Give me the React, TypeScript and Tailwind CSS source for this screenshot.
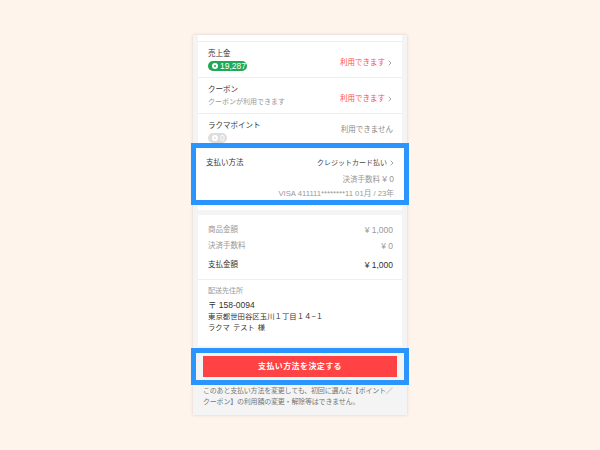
import { ChevronRight } from "lucide-react";

function Chevron() {
  return <ChevronRight className="w-[8px] h-[8px] ml-[1px] -mr-[1px] text-[#777]" strokeWidth={2} />;
}

function CoinBadge({ value, off }: { value: string; off?: boolean }) {
  return (
    <div
      className={`h-[10px] mt-[1px] inline-flex items-center self-start rounded-full gap-[2px] text-[8.5px] leading-none text-white ${
        off ? "bg-[#dddddd] w-[19px] pl-[4px]" : "bg-[#1fa855] w-[39px] pl-[4px]"
      }`}
    >
      <span className="w-[6px] h-[6px] shrink-0 rounded-full border-[2px] border-white" />
      {value}
    </div>
  );
}

function UseRow({
  title,
  sub,
  status,
  active,
}: {
  title: string;
  sub: React.ReactNode;
  status: string;
  active?: boolean;
}) {
  return (
    <div className="h-[36px] flex justify-between items-center pl-[10px] pr-[9px] border-t border-[#eeeeee]">
      <div className="flex flex-col">
        <span className="text-[7.5px] leading-[12px] text-[#333]">{title}</span>
        {sub}
      </div>
      <div className={`flex items-center ${active ? "mt-[6px]" : "-mt-[3px]"}`}>
        <span className={`text-[7.5px] ${active ? "text-[#ff4b4f]" : "text-[#888]"}`}>{status}</span>
        {active && <Chevron />}
      </div>
    </div>
  );
}

export default function App() {
  return (
    <div
      className="w-[600px] h-[450px] bg-[#fff4ec] overflow-hidden pt-[35px]"
      style={{ fontFamily: '"Liberation Sans", "Noto Sans CJK JP", sans-serif' }}
    >
      <div className="w-[214px] h-[380px] ml-[193px] bg-[#f4f4f4] shadow-[0_0_3px_rgba(0,0,0,0.15)] px-[5px] flex flex-col">
        {/* ---------- points + payment method ---------- */}
        <div className="bg-white pt-[6px] pb-[5px] shrink-0">
          <div className="h-[102px] overflow-hidden">
            <UseRow title="売上金" sub={<CoinBadge value="19,287" />} status="利用できます" active />
            <UseRow
              title="クーポン"
              sub={<span className="text-[7px] leading-[12px] text-[#999]">クーポンが利用できます</span>}
              status="利用できます"
              active
            />
            <UseRow title="ラクマポイント" sub={<CoinBadge value="0" off />} status="利用できません" />
          </div>

          <div className="-mx-[7px] h-[62px] border-[5px] border-[#2b95ff] bg-white pl-[10px] pr-[9px] pt-[8px]">
            <div className="flex justify-between items-center h-[14px]">
              <span className="text-[7.5px] text-[#333]">支払い方法</span>
              <div className="flex items-center">
                <span className="text-[7px] text-[#444]">クレジットカード払い</span>
                <Chevron />
              </div>
            </div>
            <div className="text-right text-[7.5px] leading-[12px] text-[#999] mt-[3px] pr-[1px]">
              決済手数料 <span className="text-[8.5px]">¥ 0</span>
            </div>
            <div className="text-right text-[7.7px] leading-[12px] text-[#999] mt-[2px] pr-[1px]">
              VISA 411111********11 01月 / 23年
            </div>
          </div>
        </div>

        {/* ---------- summary ---------- */}
        <div className="bg-white mt-[5px] h-[131px] shrink-0 flex flex-col">
          <div className="h-[65px] pl-[10px] pr-[9px] pt-[8px] border-b border-[#eeeeee] shrink-0">
            <div className="flex justify-between items-center h-[14px] text-[7.5px] text-[#999]">
              <span>商品金額</span>
              <span className="text-[8.5px]">¥ 1,000</span>
            </div>
            <div className="flex justify-between items-center h-[14px] mt-[2px] text-[7.5px] text-[#999]">
              <span>決済手数料</span>
              <span className="text-[8.5px]">¥ 0</span>
            </div>
            <div className="flex justify-between items-center h-[14px] mt-[5px] text-[7.5px] text-[#333]">
              <span>支払金額</span>
              <span className="text-[8.5px]">¥ 1,000</span>
            </div>
          </div>
          <div className="px-[10px] pt-[5px]">
            <div className="text-[7px] leading-[12px] text-[#999]">配送先住所</div>
            <div className="text-[8.5px] leading-[11px] text-[#333] mt-[3px]">〒 158-0094</div>
            <div className="text-[7.4px] leading-[11px] text-[#333]">東京都世田谷区玉川１丁目１４−１</div>
            <div className="text-[7.3px] leading-[11px] text-[#333] [word-spacing:1px]">ラクマ テスト 様</div>
          </div>
        </div>

        {/* ---------- submit ---------- */}
        <div className="-mx-[7px] mt-[2px] h-[37px] shrink-0 border-[5px] border-[#2b95ff] bg-[#f4f4f4] px-[7px] py-[3px] flex">
          <button className="w-full bg-[#ff4244] text-white text-[8px] font-bold tracking-[0.4px]">
            支払い方法を決定する
          </button>
        </div>

        <p className="px-[5px] text-[7px] leading-[11px] tracking-[-0.2px] text-[#777]">
          このあと支払い方法を変更しても、初回に選んだ【ポイント／
          <br />
          クーポン】の利用額の変更・解除等はできません。
        </p>
      </div>
    </div>
  );
}
